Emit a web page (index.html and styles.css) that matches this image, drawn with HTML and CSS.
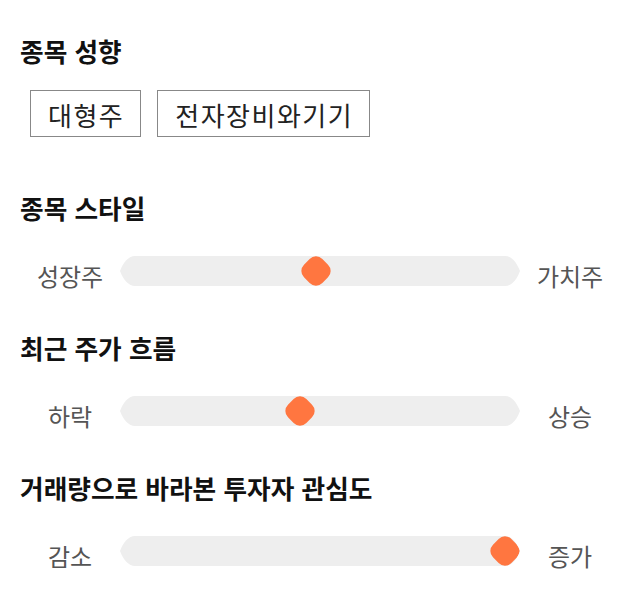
FILE: index.html
```html
<!DOCTYPE html>
<html lang="ko">
<head>
<meta charset="utf-8">
<link rel="stylesheet" href="styles.css">
</head>
<body>
<main class="panel">
  <section class="section section-chips">
    <h2 class="title">종목 성향</h2>
    <div class="chips">
      <span class="chip">대형주</span>
      <span class="chip">전자장비와기기</span>
    </div>
  </section>
  <section class="section">
    <h2 class="title">종목 스타일</h2>
    <div class="slider">
      <span class="label">성장주</span>
      <div class="track"><span class="thumb" style="--v:0.49"></span></div>
      <span class="label">가치주</span>
    </div>
  </section>
  <section class="section">
    <h2 class="title">최근 주가 흐름</h2>
    <div class="slider">
      <span class="label">하락</span>
      <div class="track"><span class="thumb" style="--v:0.446"></span></div>
      <span class="label">상승</span>
    </div>
  </section>
  <section class="section">
    <h2 class="title">거래량으로 바라본 투자자 관심도</h2>
    <div class="slider">
      <span class="label">감소</span>
      <div class="track"><span class="thumb" style="--v:1"></span></div>
      <span class="label">증가</span>
    </div>
  </section>
</main>
</body>
</html>
```

FILE: styles.css
```css
* { box-sizing: border-box; }
html, body { margin: 0; padding: 0; background: #fff; }
body {
  font-family: "Noto Sans CJK KR", "Noto Sans", sans-serif;
  color: #111;
}
.panel {
  padding: 33px 20px 0;
  display: flex;
  flex-direction: column;
}
.section + .section { margin-top: 38px; }
.section-chips { padding-bottom: 15px; }
.title {
  margin: 0;
  font-size: 25.7px;
  line-height: 35px;
  font-weight: 700;
  color: #111;
}
.chips {
  margin-top: 22px;
  padding-left: 10px;
  display: flex;
  gap: 16px;
}
.chip {
  display: inline-block;
  border: 1px solid #888;
  padding: 6px 16px 4px 17px;
  font-size: 26px;
  line-height: 35px;
  letter-spacing: 1.5px;
  color: #222;
}
.slider {
  margin-top: 31px;
  display: grid;
  grid-template-columns: 100px 1fr 100px;
  align-items: start;
}
.label {
  margin-top: 4px;
  text-align: center;
  font-size: 24px;
  line-height: 32px;
  color: #555;
}
.track {
  position: relative;
  height: 30px;
  background: #eeeeee;
  clip-path: path("M 15 0 H 385 C 392 0, 397 7, 400 15 C 397 23, 392 30, 385 30 H 15 C 8 30, 3 23, 0 15 C 3 7, 8 0, 15 0 Z");
}
.thumb {
  position: absolute;
  top: 15px;
  left: calc(15px + (100% - 30px) * var(--v));
  width: 26px;
  height: 26px;
  margin: -13px 0 0 -13px;
  border-radius: 9px;
  background: #ff7640;
  transform: rotate(45deg);
}
```
